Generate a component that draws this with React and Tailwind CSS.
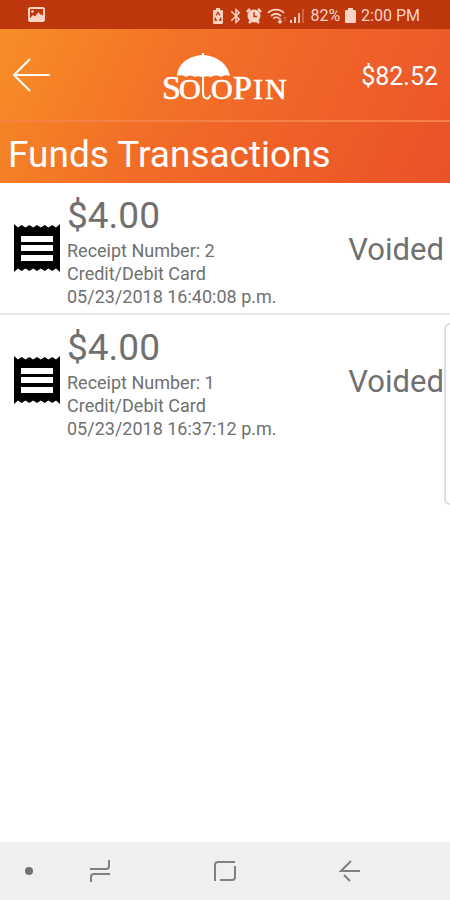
import React from 'react';
import { MdBluetooth } from 'react-icons/md';

const transactions = [
  { id: 2, amount: '$4.00', method: 'Credit/Debit Card', date: '05/23/2018 16:40:08 p.m.', status: 'Voided' },
  { id: 1, amount: '$4.00', method: 'Credit/Debit Card', date: '05/23/2018 16:37:12 p.m.', status: 'Voided' },
];

const PictureIcon = () => (
  <svg width="17" height="15" viewBox="0 0 17 15" fill="currentColor" aria-hidden="true">
    <path fillRule="evenodd" d="M1.500 0h14L17 1.500v12L15.500 15h-14L0 13.500v-12zM2 2v9l3-3 2 1.500L10.500 5l2 3 1-1L15 9V2z" />
    <circle cx="4.500" cy="4.500" r="1.300" />
  </svg>
);

const RecycleBattery = () => (
  <svg width="12" height="16" viewBox="0 0 12 16" fill="currentColor" aria-hidden="true">
    <path d="M4 0h4v2h2l1 1v12l-1 1H2l-1-1V3l1-1h2z" />
    <path d="M4 7.500L6 4.500l2 3M3.500 9.500L3 12h2M8.500 9.500L9 12H7" fill="none" stroke="#bd360c" strokeWidth="1.300" />
  </svg>
);

const AlarmIcon = () => (
  <svg width="16" height="16" viewBox="0 0 16 16" aria-hidden="true">
    <path d="M1 4l3-3M15 4l-3-3M3 15l2-2M13 15l-2-2" stroke="currentColor" strokeWidth="2.500" />
    <circle cx="8" cy="8" r="6.500" fill="currentColor" />
    <path d="M8 4v4.500h3" fill="none" stroke="#bd360c" strokeWidth="1.400" />
  </svg>
);

const WifiIcon = () => (
  <svg width="20" height="16" viewBox="0 0 20 16" fill="none" stroke="currentColor" aria-hidden="true">
    <path d="M1 5C5 0.500 13 0.500 17 5" strokeWidth="1.800" />
    <path d="M4 8c3-3 7-3 10 0" strokeWidth="1.800" />
    <path d="M6.500 10.500c1.500-1.500 4-1.500 5.500 0" strokeWidth="1.800" />
    <path d="M13 10v5M11 13l2 2 2-2" strokeWidth="1.400" />
    <path d="M18 13V9M16.500 10.500L18 9l1.500 1.500" strokeWidth="1" opacity="0.300" />
  </svg>
);

const SignalIcon = () => (
  <svg width="15" height="14" viewBox="0 0 15 14" fill="currentColor" aria-hidden="true">
    <path d="M0 11h2v3H0zM4 8h2v6H4z" />
    <path d="M8 4h2v10H8z" opacity="0.800" />
    <path d="M12 0h2v14h-2z" opacity="0.300" />
  </svg>
);

const BatteryIcon = () => (
  <svg width="11" height="15" viewBox="0 0 11 15" fill="currentColor" aria-hidden="true">
    <path d="M3 0h5v2h2l1 1v11l-1 1H1l-1-1V3l1-1h2z" />
  </svg>
);

const StatusBar = () => (
  <div className="flex h-[29px] items-center justify-between bg-[#bd360c] pl-7 pr-[30px] text-[#fbd3c3]">
    <PictureIcon />
    <div className="flex items-center pt-0.5">
      <RecycleBattery />
      <MdBluetooth size={18} className="ml-[3px]" />
      <span className="ml-px"><AlarmIcon /></span>
      <span className="ml-[5px]"><WifiIcon /></span>
      <span className="ml-[3px]"><SignalIcon /></span>
      <span className="ml-[5px] text-[16px] leading-5">82%</span>
      <span className="ml-[5px]"><BatteryIcon /></span>
      <span className="ml-[5px] text-[16px] leading-5">2:00 PM</span>
    </div>
  </div>
);

const Logo = () => (
  <svg width="126" height="72" viewBox="0 0 126 72" role="img" aria-label="SoloPin">
    <g transform="translate(0 13)">
      <path d="M15 24C16 11 27 4 40 3l0-2h2v2c13 1 24 9 26 21-3-1-6-1-9 1-3-2-7-2-10 0-3-1-5-1-7 0h-2c-3-1-5-1-7 0-3-2-6-2-9 0-3-2-6-2-9-1z" fill="#fff" />
      <path d="M41 22v19c0 7 7 7 7 2" fill="none" stroke="#fff" strokeWidth="2" />
    </g>
    <g fill="#fff" stroke="#fff" strokeWidth="0.600" fontFamily="'Liberation Serif', serif">
      <text x="0" y="60" fontSize="34">S</text>
      <text x="17" y="60" fontSize="30">O</text>
      <text x="49" y="60" fontSize="30">O</text>
      <text x="71" y="60" fontSize="34">P</text>
      <text x="91" y="60" fontSize="30">I</text>
      <text x="103" y="60" fontSize="30">N</text>
    </g>
  </svg>
);

const Header = () => (
  <header>
    <div className="grid h-[91px] grid-cols-[1fr_auto_1fr] items-center bg-linear-[115deg,#f78e27,#f47427_35%,#f06528_65%,#ec572a] px-3 text-white">
      <button aria-label="Back">
        <svg width="40" height="34" viewBox="0 0 40 34" fill="none" stroke="currentColor" strokeWidth="2">
          <path d="M18 1L2 17l16 16M2 17h36" />
        </svg>
      </button>
      <Logo />
      <span className="pt-1 text-right text-[25px] leading-8">$82.52</span>
    </div>
    <div className="flex h-[63px] items-center border-t-2 border-[#f58146] bg-linear-[115deg,#f58426,#f26b27_35%,#ee5f28_65%,#e95229] px-2 pt-1">
      <h1 className="text-[37px] leading-10 text-white">Funds Transactions</h1>
    </div>
  </header>
);

const ReceiptIcon = () => (
  <svg width="46" height="48" viewBox="0 0 46 48" className="shrink-0" aria-hidden="true">
    <path
      fillRule="evenodd"
      d="M0 0L4 3.500 7.700 1l3.800 2.500L15.300 1l3.900 2.500L23 1l3.800 2.500L30.700 1l3.800 2.500L38.300 1 42 3.500 46 0V48L42 44.500 38.300 47l-3.800-2.500L30.700 47l-3.900-2.500L23 47l-3.800-2.500L15.300 47l-3.800-2.500L7.700 47 4 44.500 0 48zM7 12v6h32v-6zM7 21v6h32v-6zM7 31v6h32v-6z"
    />
  </svg>
);

const TransactionRow = ({ transaction }) => (
  <li className="flex items-center border-b-2 border-[#e8e8e8] pl-[14px] pr-[6px] text-[#707070] last:border-transparent">
    <ReceiptIcon />
    <div className="ml-[7px] flex-1 pb-[5px] pt-[13px]">
      <p className="text-[37px] leading-10">{transaction.amount}</p>
      <div className="pt-[3px] text-[18px] leading-[23px]">
        <p>Receipt Number: {transaction.id}</p>
        <p>{transaction.method}</p>
        <p>{transaction.date}</p>
      </div>
    </div>
    <span className="pt-1 text-[31px] leading-10">{transaction.status}</span>
  </li>
);

const NavBar = () => (
  <nav className="grid h-[58px] grid-cols-[58px_84px_1fr_84px_58px] items-center justify-items-center bg-[#efefef] text-[#808080]">
    <span className="size-2 rounded-full bg-[#707070]" />
    <button aria-label="Recent apps">
      <svg width="22" height="22" viewBox="0 0 22 22" fill="none" stroke="currentColor" strokeWidth="2">
        <path d="M1 9h16q3 0 3-3V0M21 14H5q-3 0-3 3v5" />
      </svg>
    </button>
    <button aria-label="Home">
      <svg width="22" height="22" viewBox="0 0 22 22" fill="none" stroke="currentColor" strokeWidth="2">
        <path d="M21 2H4q-3 0-3 3v16M21 6v11q0 3-3 3H6" />
      </svg>
    </button>
    <button aria-label="Back">
      <svg width="22" height="22" viewBox="0 0 22 22" fill="none" stroke="currentColor" strokeWidth="2">
        <path d="M12 1L2 11h19M5 15l6 6" />
      </svg>
    </button>
  </nav>
);

const App = () => {
  return (
    <div className="relative flex min-h-screen flex-col overflow-hidden bg-white font-['Roboto',sans-serif]">
      <StatusBar />
      <Header />
      <main className="flex-1">
        <ul>
          {transactions.map((transaction) => (
            <TransactionRow key={transaction.id} transaction={transaction} />
          ))}
        </ul>
      </main>
      <NavBar />
      {/* Edge panel handle */}
      <div className="absolute right-0 top-[323px] h-[182px] w-[6px] rounded-l-lg border-2 border-r-0 border-[#dedede] bg-white" />
    </div>
  );
};

export default App;
